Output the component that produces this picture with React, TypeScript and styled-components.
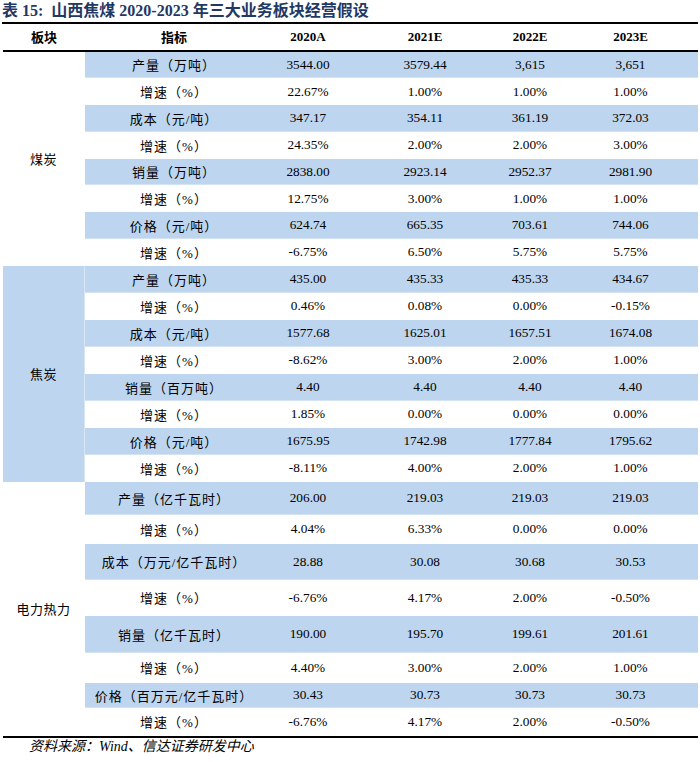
import React from "react";
import styled, { createGlobalStyle } from "styled-components";

const GlobalStyle = createGlobalStyle`
  html, body { margin: 0; padding: 0; background: #ffffff; }
  body { font-family: "Liberation Serif", "Noto Sans CJK SC", serif; color: #000; }
`;

const FILL = "#bdd5ee";
const COLS = "82px 178px 90px 144px 66px 135px";

type Row = { label: string; values: string[]; h: number };
type Section = { name: string; shaded: boolean; rows: Row[] };

const mk = (hs: number[], data: [string, string[]][]): Row[] =>
  data.map(([label, values], i) => ({ label, values, h: hs[i] }));

const sections: Section[] = [
  {
    name: "煤炭",
    shaded: false,
    rows: mk(Array(8).fill(26.75), [
      ["产量（万吨）", ["3544.00", "3579.44", "3,615", "3,651"]],
      ["增速（%）", ["22.67%", "1.00%", "1.00%", "1.00%"]],
      ["成本（元/吨）", ["347.17", "354.11", "361.19", "372.03"]],
      ["增速（%）", ["24.35%", "2.00%", "2.00%", "3.00%"]],
      ["销量（万吨）", ["2838.00", "2923.14", "2952.37", "2981.90"]],
      ["增速（%）", ["12.75%", "3.00%", "1.00%", "1.00%"]],
      ["价格（元/吨）", ["624.74", "665.35", "703.61", "744.06"]],
      ["增速（%）", ["-6.75%", "6.50%", "5.75%", "5.75%"]],
    ]),
  },
  {
    name: "焦炭",
    shaded: true,
    rows: mk(Array(8).fill(27), [
      ["产量（万吨）", ["435.00", "435.33", "435.33", "434.67"]],
      ["增速（%）", ["0.46%", "0.08%", "0.00%", "-0.15%"]],
      ["成本（元/吨）", ["1577.68", "1625.01", "1657.51", "1674.08"]],
      ["增速（%）", ["-8.62%", "3.00%", "2.00%", "1.00%"]],
      ["销量（百万吨）", ["4.40", "4.40", "4.40", "4.40"]],
      ["增速（%）", ["1.85%", "0.00%", "0.00%", "0.00%"]],
      ["价格（元/吨）", ["1675.95", "1742.98", "1777.84", "1795.62"]],
      ["增速（%）", ["-8.11%", "4.00%", "2.00%", "1.00%"]],
    ]),
  },
  {
    name: "电力热力",
    shaded: false,
    rows: mk([33, 29, 36, 36, 37, 30, 25, 28], [
      ["产量（亿千瓦时）", ["206.00", "219.03", "219.03", "219.03"]],
      ["增速（%）", ["4.04%", "6.33%", "0.00%", "0.00%"]],
      ["成本（万元/亿千瓦时）", ["28.88", "30.08", "30.68", "30.53"]],
      ["增速（%）", ["-6.76%", "4.17%", "2.00%", "-0.50%"]],
      ["销量（亿千瓦时）", ["190.00", "195.70", "199.61", "201.61"]],
      ["增速（%）", ["4.40%", "3.00%", "2.00%", "1.00%"]],
      ["价格（百万元/亿千瓦时）", ["30.43", "30.73", "30.73", "30.73"]],
      ["增速（%）", ["-6.76%", "4.17%", "2.00%", "-0.50%"]],
    ]),
  },
];

const Page = styled.div`
  width: 700px;
  padding: 0 2px 0 3px;
  box-sizing: border-box;
`;

const Title = styled.div`
  height: 22px;
  line-height: 21px;
  font-size: 16px;
  font-weight: 700;
  color: #1f3864;
  margin-left: -1px;
  white-space: pre;
  border-bottom: 2.5px solid #000;
`;

const HeaderRow = styled.div`
  display: grid;
  grid-template-columns: ${COLS};
  height: 25.5px;
  align-items: center;
  border-bottom: 2.5px solid #000;
  font-weight: 700;
  font-size: 13px;
  color: #000;
`;

const HeaderCell = styled.div`
  text-align: center;
`;

const SectionBlock = styled.div`
  display: grid;
  grid-template-columns: 82px 1fr;
`;

const SectionLabel = styled.div<{ $shaded: boolean }>`
  display: flex;
  align-items: center;
  justify-content: center;
  font-size: 13px;
  letter-spacing: 0.5px;
  color: #000;
  background: ${(p) => (p.$shaded ? FILL : "transparent")};
  border-right: 1px solid ${(p) => (p.$shaded ? "#d8e6f4" : "transparent")};
  box-sizing: border-box;
`;

const Rows = styled.div`
  display: flex;
  flex-direction: column;
`;

const DataRow = styled.div<{ $shaded: boolean }>`
  display: grid;
  grid-template-columns: 178px 90px 144px 66px 135px;
  align-items: center;
  font-size: 13px;
  color: #000;
  background: ${(p) => (p.$shaded ? FILL : "transparent")};
  box-shadow: ${(p) => (p.$shaded ? "inset 0 -1px 0 #d3e3f3" : "none")};
`;

const Metric = styled.div`
  text-align: center;
  letter-spacing: 1px;
  white-space: nowrap;
`;

const Num = styled.div`
  text-align: center;
  font-size: 13.3px;
  white-space: nowrap;
`;

const Bottom = styled.div`
  border-top: 2.5px solid #000;
`;

const Source = styled.div`
  font-size: 14px;
  font-style: italic;
  line-height: 17px;
  padding-left: 26px;
  color: #000;
`;

const headers = ["板块", "指标", "2020A", "2021E", "2022E", "2023E"];

export default function App() {
  return (
    <>
      <GlobalStyle />
      <Page>
        <Title>{"表 15:  山西焦煤 2020-2023 年三大业务板块经营假设"}</Title>
        <HeaderRow>
          {headers.map((h) => (
            <HeaderCell key={h}>{h}</HeaderCell>
          ))}
        </HeaderRow>
        {sections.map((s) => (
          <SectionBlock key={s.name}>
            <SectionLabel $shaded={s.shaded}>{s.name}</SectionLabel>
            <Rows>
              {s.rows.map((r, i) => (
                <DataRow key={i} $shaded={i % 2 === 0} style={{ height: r.h }}>
                  <Metric>{r.label}</Metric>
                  {r.values.map((v, j) => (
                    <Num key={j}>{v}</Num>
                  ))}
                </DataRow>
              ))}
            </Rows>
          </SectionBlock>
        ))}
        <Bottom />
        <Source>资料来源：Wind、信达证券研发中心</Source>
      </Page>
    </>
  );
}
